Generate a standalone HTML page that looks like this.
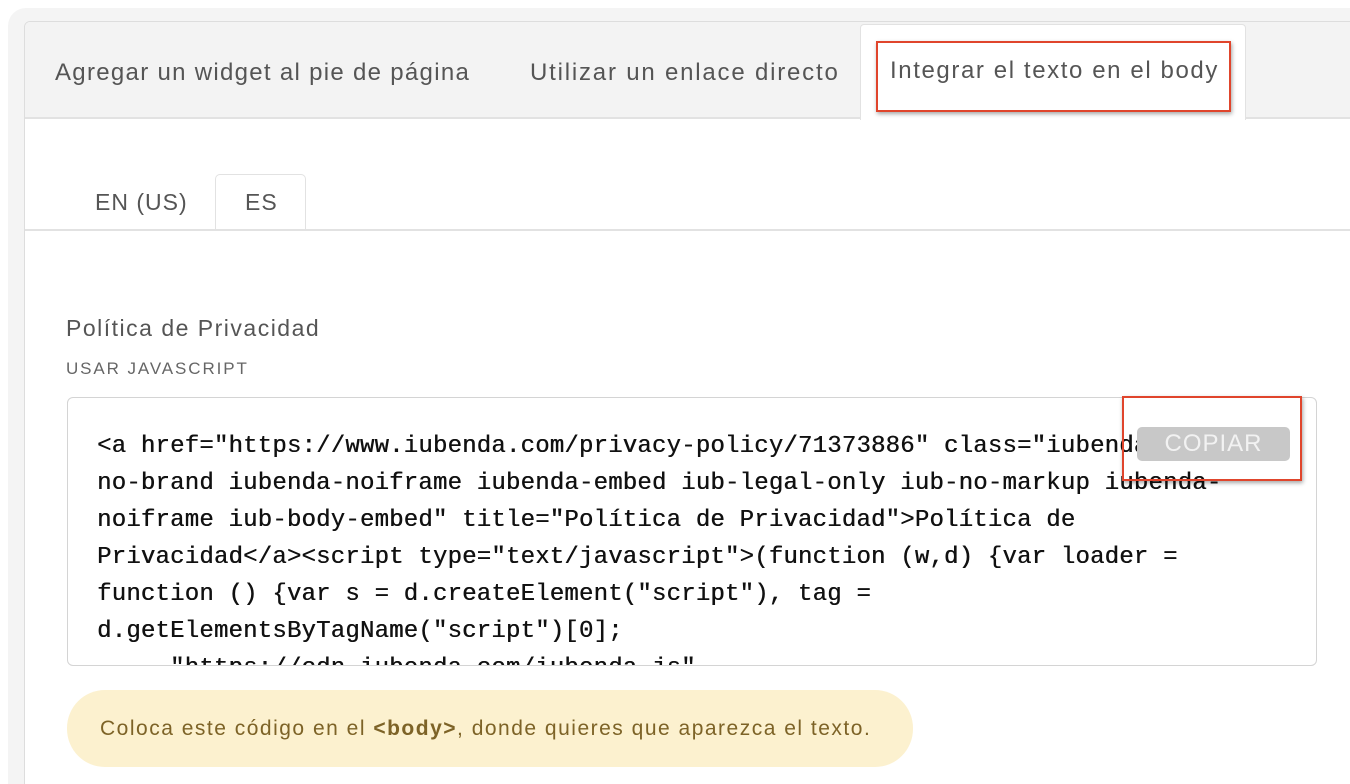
<!DOCTYPE html>
<html><head><meta charset="utf-8"><style>
*{margin:0;padding:0;box-sizing:border-box}
html,body{width:1350px;height:784px;overflow:hidden}
body{background:#fff;font-family:"Liberation Sans",sans-serif;position:relative}
.frame{position:absolute;left:8px;top:8px;width:1400px;height:800px;background:#f4f4f4;border-radius:18px}
.inner{position:absolute;left:24px;top:21px;width:1400px;height:800px;background:#fff;border:1px solid #ddd;border-radius:6px 0 0 0;overflow:hidden}
.tabbar{position:absolute;left:0;top:0;width:100%;height:97px;background:#f3f3f3;border-bottom:2px solid #e2e2e2}
.t{position:absolute;top:37px;font-size:24px;color:#555;white-space:nowrap;letter-spacing:1.3px}
.active{position:absolute;left:835px;top:2px;width:386px;height:96px;background:#fff;border:1px solid #e2e2e2;border-bottom:none;border-radius:4px 4px 0 0}
.red{position:absolute;left:851px;top:19px;width:355px;height:71px;border:2px solid #e0452c;box-shadow:1px 2px 4px rgba(0,0,0,.35)}
.lt{position:absolute;top:167px;font-size:23px;color:#555;letter-spacing:1px}
.esbox{position:absolute;left:190px;top:152px;width:91px;height:57px;background:#fff;border:1px solid #e2e2e2;border-bottom:none;border-radius:5px 5px 0 0}
.lline{position:absolute;left:0;top:207px;width:100%;height:2px;background:#e2e2e2}
.h{position:absolute;left:41px;top:293px;font-size:23px;color:#555;letter-spacing:1.5px}
.s{position:absolute;left:41px;top:337px;font-size:17px;color:#666;letter-spacing:1.9px}
.code{position:absolute;left:42px;top:375px;width:1250px;height:269px;border:1px solid #d4d4d4;border-radius:6px;overflow:hidden}
pre{position:absolute;left:29px;top:30px;font-family:"Liberation Mono",monospace;font-weight:normal;font-size:24px;line-height:37px;color:#111;letter-spacing:.2px;text-shadow:0.4px 0 0 #111}
.copy{position:absolute;left:1069px;top:29px;width:153px;height:34px;background:#c8c8c8;border-radius:5px;color:#f2f2f2;font-size:24px;text-align:center;line-height:34px;letter-spacing:1px}
.red2{position:absolute;width:180px;height:85px;border:2px solid #e0452c;box-shadow:1px 2px 4px rgba(0,0,0,.35)}
.note{position:absolute;left:42px;top:668px;width:846px;height:77px;background:#fcf1cf;border-radius:38px;color:#7d6327;font-size:21px;line-height:77px;padding-left:33px;letter-spacing:1.5px;white-space:nowrap}
</style></head><body>
<div class="frame"></div>
<div class="inner">
 <div class="tabbar">
  <div class="t" style="left:30px">Agregar un widget al pie de página</div>
  <div class="t" style="left:505px;letter-spacing:1.8px">Utilizar un enlace directo</div>
  <div class="active"></div>
  <div class="t" style="left:865px;top:35px;letter-spacing:1.6px">Integrar el texto en el body</div>
  <div class="red"></div>
 </div>
 <div class="esbox"></div>
 <div class="lline"></div>
 <div class="lt" style="left:70px">EN (US)</div>
 <div class="lt" style="left:220px">ES</div>
 <div class="h">Política de Privacidad</div>
 <div class="s">USAR JAVASCRIPT</div>
 <div class="code"><pre>&lt;a href="https://www.iubenda.com/privacy-policy/71373886" class="iubenda-white
no-brand iubenda-noiframe iubenda-embed iub-legal-only iub-no-markup iubenda-
noiframe iub-body-embed" title="Política de Privacidad"&gt;Política de
Privacidad&lt;/a&gt;&lt;script type="text/javascript"&gt;(function (w,d) {var loader =
function () {var s = d.createElement("script"), tag =
d.getElementsByTagName("script")[0];
     "https://cdn.iubenda.com/iubenda.js"</pre>
  <div class="copy">COPIAR</div>
 </div>
 <div class="red2" style="left:1097px;top:374px"></div>
 <div class="note">Coloca este código en el <b>&lt;body&gt;</b>, donde quieres que aparezca el texto.</div>
</div>
</body></html>
